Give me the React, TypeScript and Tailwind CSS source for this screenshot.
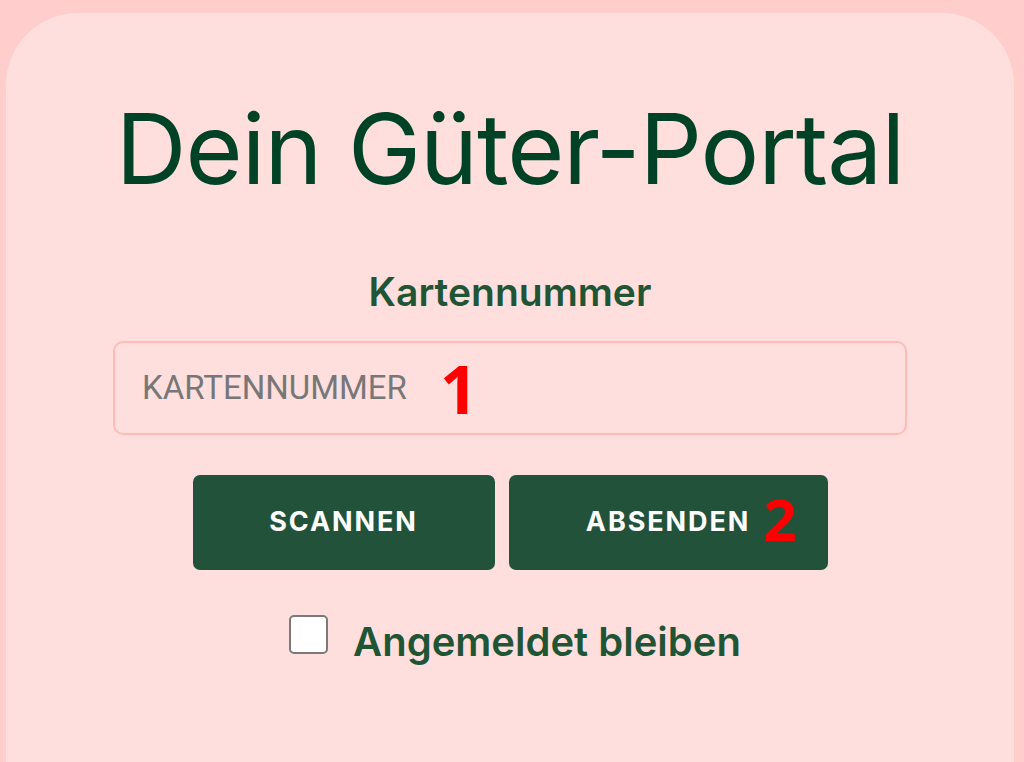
import React from 'react';

export default function App() {
  return (
    <div className="min-h-screen bg-[#ffcdcb] pl-[6px] pr-[10px] pt-[13px] flex flex-col" style={{ fontFamily: 'Inter, "Noto Sans", sans-serif' }}>
      <div className="flex-1 bg-[#ffdfdd] rounded-t-[72px] flex flex-col items-center pt-[87px]">
        {/* Title */}
        <h1 className="text-[98px] leading-none font-normal text-[#004225] tracking-[-0.01em]">Dein Güter-Portal</h1>

        {/* Card number */}
        <label className="mt-[74px] text-[39px] leading-none font-semibold text-[#1f5535]">Kartennummer</label>
        <div className="relative mt-[30px] w-[794px] h-[94px] rounded-[10px] border-2 border-[#ffbcb7] flex items-center pl-[27px]">
          <span className="text-[33px] text-[#777777]" style={{ fontFamily: 'Roboto, sans-serif' }}>KARTENNUMMER</span>
          <span className="ml-[33px] text-[66px] leading-none font-bold text-[#ff0000]" style={{ fontFamily: '"Open Sans", sans-serif' }}>1</span>
        </div>

        {/* Actions */}
        <div className="mt-[40px] flex gap-[14px]">
          <button className="w-[302px] h-[95px] rounded-[7px] bg-[#22533a] text-white text-[27px] font-bold tracking-[0.07em]">
            SCANNEN
          </button>
          <button className="relative w-[319px] h-[95px] rounded-[7px] bg-[#22533a] text-white text-[27px] font-bold tracking-[0.07em]">
            ABSENDEN
            <span className="absolute right-[29px] top-[15px] text-[58px] leading-none font-bold text-[#ff0000]" style={{ fontFamily: '"Open Sans", sans-serif' }}>2</span>
          </button>
        </div>

        {/* Remember me */}
        <label className="mt-[45px] ml-[10px] flex items-start gap-[25px]">
          <span className="w-[39px] h-[39px] rounded-[5px] border-2 border-[#7a7a7a] bg-white"></span>
          <span className="mt-[7px] text-[40px] leading-none font-semibold text-[#1f5535]">Angemeldet bleiben</span>
        </label>
      </div>
    </div>
  );
}
